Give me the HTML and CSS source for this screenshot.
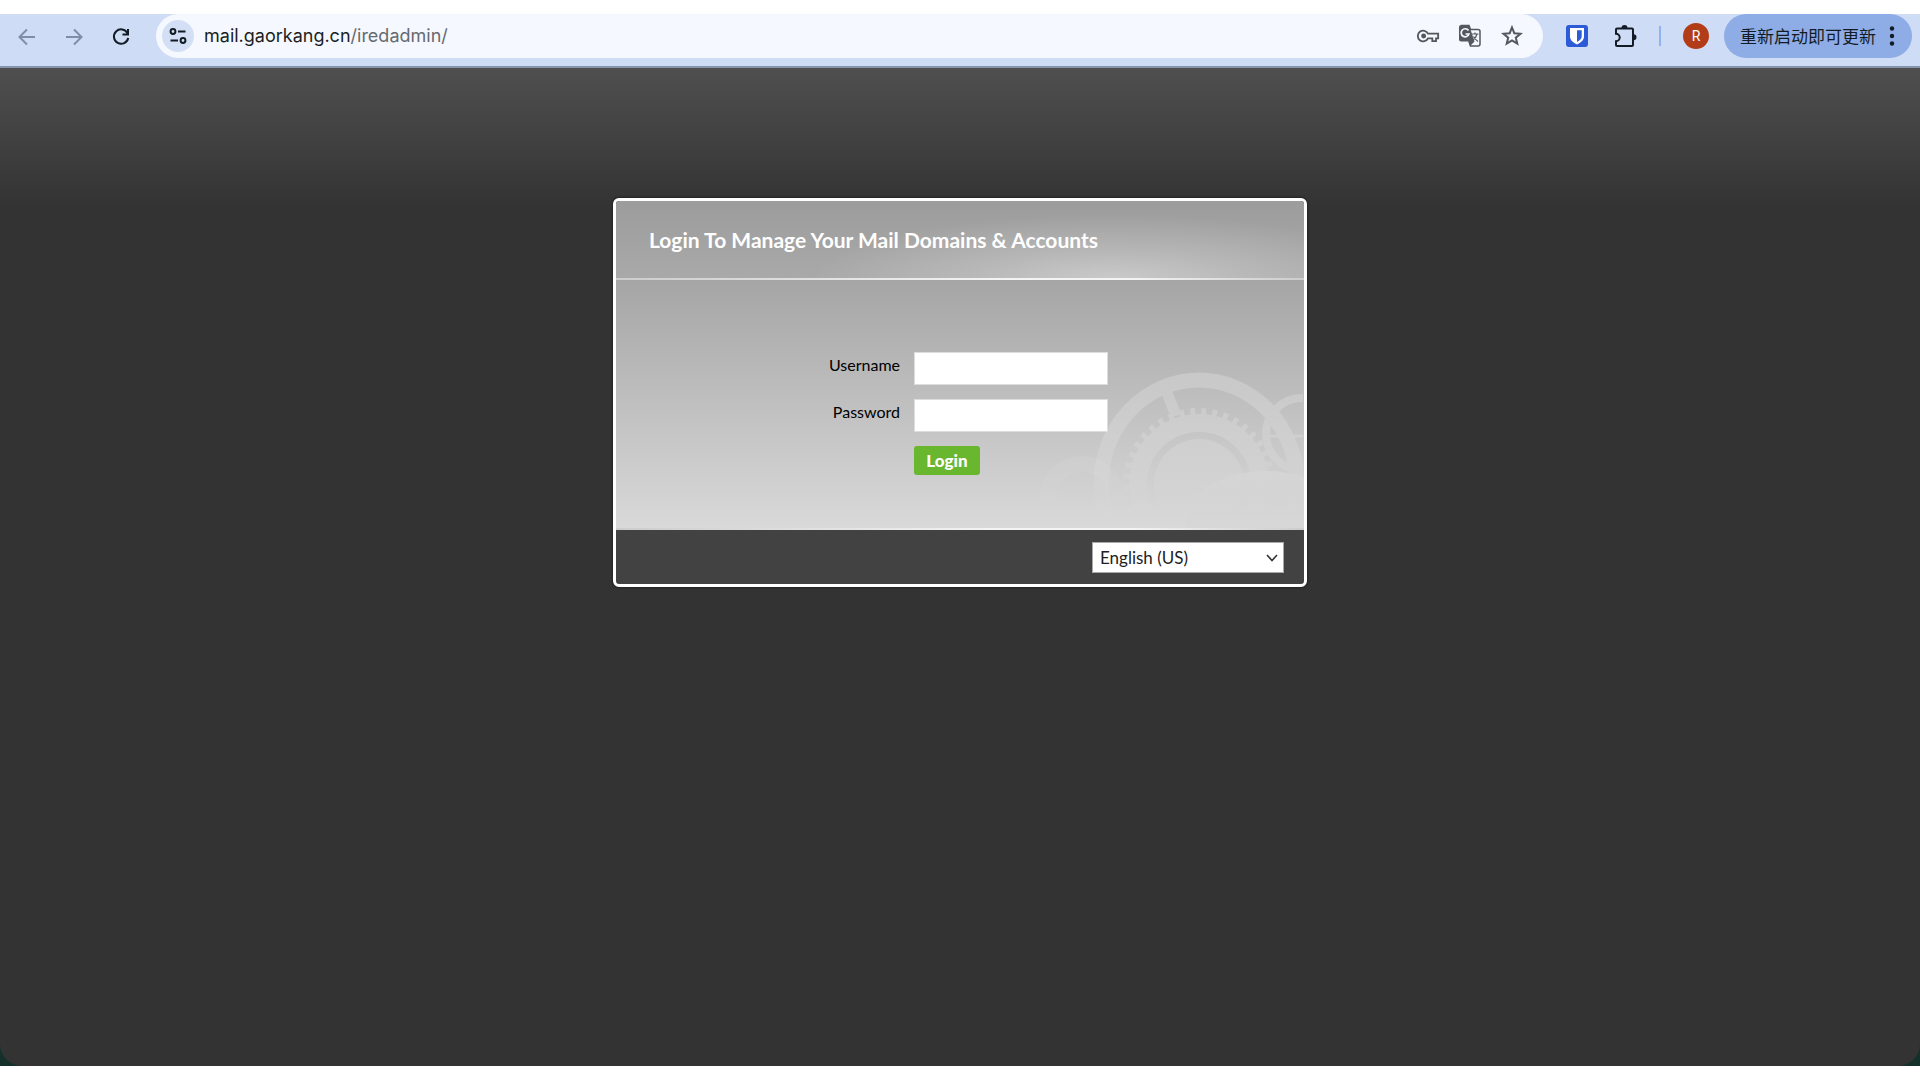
FILE: index.html
```html
<!DOCTYPE html>
<html lang="en">
<head>
<meta charset="utf-8">
<title>Login To Manage Your Mail Domains &amp; Accounts</title>
<link rel="stylesheet" href="styles.css">
</head>
<body>
<div class="window">
  <header class="toolbar">
    <nav class="nav" aria-label="Navigation">
      <button class="icon-btn muted" aria-label="Back"><svg width="24" height="24" viewBox="0 0 24 24"><path d="M20 12H5M12 4.500 4.500 12l7.500 7.500"/></svg></button>
      <button class="icon-btn muted" aria-label="Forward"><svg width="24" height="24" viewBox="0 0 24 24"><path d="M4 12h15M12 4.500l7.500 7.500-7.500 7.500"/></svg></button>
      <button class="icon-btn" aria-label="Reload"><svg width="24" height="24" viewBox="0 0 24 24"><path d="M18.500 8.200A7.200 7.200 0 1 0 19.200 13M19 4v5.500h-5.500"/></svg></button>
    </nav>
    <div class="omnibox">
      <button class="site-btn" aria-label="Site information"><svg width="22" height="22" viewBox="0 0 22 22"><circle cx="6" cy="6.500" r="2.400"/><path d="M11 6.500h7.500M3.500 15.500H11"/><circle cx="16" cy="15.500" r="2.400"/></svg></button>
      <div class="url" role="textbox" aria-label="Address" contenteditable="true" spellcheck="false">mail.gaorkang.cn<span class="path">/iredadmin/</span></div>
      <button class="icon-btn grey" aria-label="Passwords"><svg width="24" height="24" viewBox="0 0 26 24"><path d="M13 9.500H24v5h-2.300v3h-4v-3H13A5.800 5.800 0 1 1 13 9.500z"/><circle cx="8.300" cy="12" r="2.700" fill="currentColor" stroke="none"/></svg></button>
      <button class="icon-btn grey" aria-label="Translate"><svg width="24" height="24" viewBox="0 0 24 24"><path d="M3 1.500h8l1.500 4H20a2 2 0 0 1 2 2V20a2 2 0 0 1-2 2h-7.500l-1.500-4.500" stroke-width="1.500"/><path d="M3 1h8l5.500 16.500L12 22l-1.500-4.500H3a2 2 0 0 1-2-2V3a2 2 0 0 1 2-2z" fill="currentColor" stroke="none"/><path d="M10.500 6.500A4 4 0 1 0 11 10H7.500" stroke="#f5f8fe" stroke-width="1.700"/><path d="M13.500 10h7M17 8.500V10M19 10c-.7 3-2.500 5-4 6M15.500 12.500c1 2 2.500 3.500 4.500 5" stroke-width="1.200"/></svg></button>
      <button class="icon-btn grey" aria-label="Bookmark"><svg width="24" height="24" viewBox="0 0 24 24"><path d="M12 3.500l2.300 5.700 6.200.5-4.700 4 1.500 6L12 16.500l-5.300 3.200 1.500-6-4.700-4 6.200-.5z"/></svg></button>
    </div>
    <div class="actions">
      <button class="icon-btn" aria-label="Bitwarden"><svg width="22" height="22" viewBox="0 0 22 22"><rect width="22" height="22" rx="3" fill="#2d5bd8" stroke="none"/><path d="M4 3h14v8.500c0 3.800-3.200 6-7 8-3.800-2-7-4.200-7-8z" fill="#fff" stroke="none"/><path d="M11 5.300h4.700v6.200c0 2.300-2 3.900-4.700 5.400z" fill="#2d5bd8" stroke="none"/></svg></button>
      <button class="icon-btn" aria-label="Extensions"><svg width="26" height="26" viewBox="0 0 26 26"><path d="M5 5.500h15a1 1 0 0 1 1 1V22a1 1 0 0 1-1 1H5a1 1 0 0 1-1-1v-3.800a3.700 3.700 0 0 0 0-7.400V6.500a1 1 0 0 1 1-1z"/><path d="M9.500 5a3 3 0 0 1 6 0zM21.500 11.200a3 3 0 0 1 0 6z" fill="currentColor" stroke="none"/></svg></button>
      <span class="divider"></span>
      <button class="avatar" aria-label="Profile">R</button>
      <button class="update"><span>重新启动即可更新</span><svg width="6" height="22" viewBox="0 0 6 22"><g fill="currentColor" stroke="none"><circle cx="3" cy="3.500" r="2.200"/><circle cx="3" cy="11" r="2.200"/><circle cx="3" cy="18.500" r="2.200"/></g></svg></button>
    </div>
  </header>
  <main class="page">
    <form class="panel">
      <h1 class="title">Login To Manage Your Mail Domains &amp; Accounts</h1>
      <div class="content">
        <svg class="gears" width="320" height="180" viewBox="0 0 320 180" aria-hidden="true">
          <defs>
            <linearGradient id="fade" x2="0" y2="1"><stop offset="0" stop-color="#fff"/><stop offset=".5" stop-color="#aaa"/><stop offset=".85" stop-color="#222"/><stop offset="1" stop-color="#000"/></linearGradient>
            <linearGradient id="mound" x2="0" y2="1"><stop offset="0" stop-color="#d5d5d5"/><stop offset="1" stop-color="#d5d5d5" stop-opacity="0"/></linearGradient>
            <mask id="fadeMask"><rect width="320" height="180" fill="url(#fade)"/></mask>
          </defs>
          <g mask="url(#fadeMask)" stroke="#fff" fill="none">
            <g opacity=".24">
              <ellipse cx="215" cy="136" rx="98" ry="104" stroke-width="15"/>
              <circle cx="215" cy="136" r="61" stroke-width="18"/>
              <circle cx="215" cy="136" r="72" stroke-width="8" stroke-dasharray="5 6"/>
              <circle cx="215" cy="136" r="45" fill="#fff" stroke="none"/>
              <path d="M182 42l10 26" stroke-width="11"/>
              <circle cx="318" cy="86" r="36" stroke-width="8"/>
              <path d="M282 88h38" stroke-width="3"/>
            </g>
            <g opacity=".14">
              <circle cx="98" cy="150" r="34" stroke-width="16"/>
            </g>
          </g>
          <ellipse cx="282" cy="174" rx="80" ry="51" fill="url(#mound)" stroke="none"/>
        </svg>
        <div class="fields">
          <label for="username">Username</label>
          <input id="username" type="text">
          <label for="password">Password</label>
          <input id="password" type="password">
          <button class="login" type="submit">Login</button>
        </div>
      </div>
      <div class="footer">
        <div class="lang">
          <select aria-label="Language"><option>English (US)</option></select>
          <svg class="chevron" width="12" height="8" viewBox="0 0 12 8"><path d="M1 1l5 5.500L11 1"/></svg>
        </div>
      </div>
    </form>
  </main>
</div>
</body>
</html>
```
FILE: styles.css
```css
* { box-sizing: border-box; }
body {
  margin: 0;
  padding: 14px 0;
  min-height: 100vh;
  display: flex;
  background: #fff;
  font-family: Lato, "Liberation Sans", sans-serif;
}
button { border: 0; padding: 0; background: none; font: inherit; color: inherit; }
svg { display: block; fill: none; stroke: currentColor; stroke-width: 2; }
.window { flex: 1; display: flex; flex-direction: column; background: #14302b; }

/* browser toolbar */
.toolbar {
  display: flex;
  align-items: flex-start;
  height: 54px;
  background: #cfdcf5;
  border-bottom: 2px solid #8695ae;
  color: #131c26;
}
.nav { display: flex; gap: 23px; padding-left: 15px; height: 44px; margin-right: 23px; }
.icon-btn { display: flex; align-items: center; justify-content: center; height: 45px; min-width: 24px; }
.muted { color: #808da9; }
.grey { color: #54585d; }
.omnibox {
  flex: 1;
  display: flex;
  align-items: center;
  gap: 18px;
  height: 44px;
  padding: 0 19px 0 6px;
  border-radius: 22px;
  background: #f5f8fe;
}
.site-btn {
  display: flex;
  align-items: center;
  justify-content: center;
  width: 32px;
  height: 32px;
  border-radius: 50%;
  background: #d3dff4;
}
.url {
  flex: 1;
  margin-left: -8px;
  font: 18px/46px Inter, sans-serif;
  color: #1b1e22;
  white-space: nowrap;
}
.path { color: #666a70; }
.actions { display: flex; align-items: center; height: 44px; padding: 0 8px 0 22px; }
.actions .icon-btn + .icon-btn { margin-left: 23px; }
.divider { width: 2px; height: 20px; margin: 0 22px 0 21px; background: #8fb3ee; }
.avatar {
  width: 26px;
  height: 26px;
  border-radius: 50%;
  background: #b23c17;
  color: #fff;
  font: 14px/26px Roboto, sans-serif;
}
.update {
  display: flex;
  align-items: center;
  gap: 13px;
  height: 44px;
  margin-left: 15px;
  padding: 0 17px 0 16px;
  border-radius: 22px;
  background: #8eace6;
  font: 17px/44px "Noto Sans CJK SC", sans-serif;
}

/* login page */
.page {
  flex: 1;
  padding: 130px 20px 40px;
  border-radius: 0 0 22px 22px;
  background: #333 linear-gradient(#4f4f4f, #333 140px) no-repeat;
}
.panel {
  position: relative;
  max-width: 694px;
  margin: 0 auto;
  overflow: hidden;
  border: 3px solid #fff;
  border-radius: 6px;
  background: #424242;
  box-shadow: 0 0 3px #111;
}
.title {
  margin: 0;
  padding: 0 33px;
  font-family: Lato, sans-serif;
  font-size: 21px;
  font-weight: 700;
  line-height: 77px;
  color: #fff;
  background:
    radial-gradient(ellipse 300px 64px at 72% 100%, #ffffff60, #ffffff30 45%, #fff0),
    linear-gradient(#9c9c9c, #a9a9a9);
}
.content {
  position: relative;
  padding: 72px 0 53px;
  border-top: 2px solid;
  border-bottom: 2px solid;
  border-image: linear-gradient(to right, #ccc, #f4f4f4 55%, #f4f4f4 75%, #ccc) 2;
  background: linear-gradient(#a5a5a5, #bdbdbd 45%, #d9d9d9);
}
.gears { position: absolute; right: 0; bottom: 0; }
.fields {
  position: relative;
  display: grid;
  grid-template-columns: 284px 194px;
  column-gap: 14px;
  row-gap: 14px;
  font-size: 17px;
  color: #000;
}
.fields label { text-align: right; font-size: 16px; line-height: 26px; }
.fields input {
  height: 33px;
  padding: 4px 6px;
  border: 1px solid #ddd;
  background: #fff;
  font: inherit;
}
.login {
  grid-column: 2;
  justify-self: start;
  width: 66px;
  height: 29px;
  border-radius: 3px;
  background: #69b62f;
  color: #fff;
  font-weight: 900;
}
.footer { display: flex; justify-content: flex-end; padding: 12px 20px 11px; }
.lang { position: relative; }
.lang select {
  display: block;
  appearance: none;
  width: 192px;
  height: 31px;
  padding: 0 7px;
  border: 1px solid #aaa;
  border-radius: 0;
  background: #fff;
  color: #222;
  font: 17px Lato, sans-serif;
}
.chevron { position: absolute; right: 6px; top: 12px; color: #333; stroke-width: 1.6; }
```
